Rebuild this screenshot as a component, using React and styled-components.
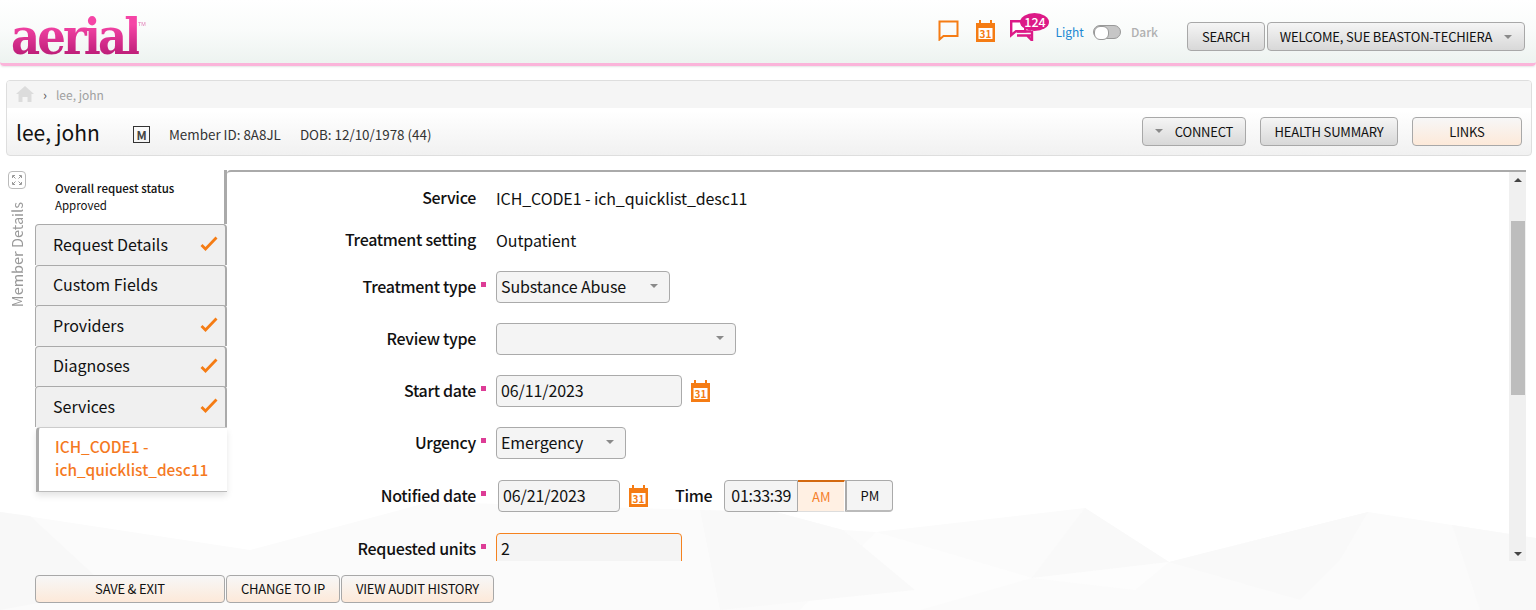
import styled, { createGlobalStyle } from "styled-components";

const GlobalStyle = createGlobalStyle`
  * { box-sizing: border-box; }
  html, body { margin: 0; padding: 0; background: #fff; }
  body {
    font-family: "Noto Sans CJK JP", "Noto Sans", sans-serif;
    color: #111;
    overflow: hidden;
  }
`;

const Page = styled.div`
  position: relative;
  width: 1536px;
  height: 610px;
  overflow: hidden;
  display: flex;
  flex-direction: column;
`;

const Backdrop = styled.svg`
  position: absolute;
  left: 0;
  bottom: 0;
  z-index: 0;
`;

const Header = styled.header`
  position: relative;
  z-index: 1;
  height: 66px;
  flex: none;
  display: flex;
  align-items: center;
  padding: 0 11px 0 11px;
  background: linear-gradient(#fff 0%, #f9fbfa 50%, #edf3f0 100%);
  border-bottom: 3px solid #fbb4da;
  border-radius: 0 0 4px 4px;
  box-shadow: 0 1px 2px rgba(0, 0, 0, 0.1);
`;

const Logo = styled.div`
  position: relative;
  font-family: "DejaVu Serif", serif;
  font-weight: 700;
  font-size: 50px;
  line-height: 50px;
  letter-spacing: -3.2px;
  margin-top: 10px;
  transform: scaleX(0.9);
  transform-origin: left center;
  background: linear-gradient(#f545a6 25%, #b91a75 90%);
  -webkit-background-clip: text;
  background-clip: text;
  color: transparent;
`;

const Tm = styled.span`
  position: absolute;
  top: 8px;
  right: -8px;
  font-family: "Liberation Sans", sans-serif;
  font-size: 6px;
  line-height: 8px;
  letter-spacing: 0;
  font-weight: 400;
  color: #e07ab5;
  -webkit-text-fill-color: #e07ab5;
`;

const HeaderTools = styled.div`
  margin-left: auto;
  display: flex;
  align-items: center;
  margin-top: 10px;
`;

const IconGroup = styled.div`
  display: flex;
  align-items: center;
  width: 117px;
  gap: 17px;
  margin-top: -12px;
`;

const Messages = styled.div`
  position: relative;
  width: 24px;
  height: 21px;
  margin-left: -2px;
`;

const Badge = styled.span`
  position: absolute;
  left: 10px;
  top: -7px;
  width: 29px;
  height: 18px;
  border-radius: 50%;
  background: #dc1a87;
  color: #fff;
  font-size: 12.5px;
  font-weight: 500;
  line-height: 17px;
  text-align: center;
`;

const ThemeLabel = styled.span`
  font-size: 12px;
  line-height: 20px;
  color: ${(p) => (p.$on ? "#1b87d2" : "#b0b0b0")};
  font-weight: ${(p) => (p.$on ? 400 : 500)};
`;

const Toggle = styled.span`
  position: relative;
  display: block;
  width: 28px;
  height: 14px;
  margin: 0 10px 0 9px;
  border-radius: 7px;
  border: 1px solid #999;
  background: #c6c6c6;
  &::before {
    content: "";
    position: absolute;
    left: 0;
    top: 0;
    width: 13px;
    height: 12px;
    border-radius: 6px;
    background: #fff;
    border: 1px solid #999;
  }
`;

const ThemeSwitch = styled.div`
  display: flex;
  align-items: center;
  margin-right: 29px;
  margin-top: -9px;
`;

const Button = styled.button`
  height: ${(p) => p.$h || 29}px;
  width: ${(p) => p.$w}px;
  flex: none;
  display: flex;
  align-items: center;
  justify-content: center;
  gap: 12px;
  padding: 0 0 ${(p) => (p.$h ? 2 : 0)}px;
  border: 1px solid #a8a8a8;
  border-radius: 4px;
  font-family: inherit;
  font-size: 13px;
  letter-spacing: -0.2px;
  color: #111;
  background: ${(p) =>
    p.$warm
      ? "linear-gradient(#f7f7f7 0%, #fde9d9 100%)"
      : "linear-gradient(#f5f5f5 0%, #d8d8d8 100%)"};
`;

const Caret = styled.i`
  display: inline-block;
  width: 0;
  height: 0;
  border-left: 4px solid transparent;
  border-right: 4px solid transparent;
  border-top: 4px solid #8a8a8a;
`;

const ButtonPair = styled.div`
  display: flex;
  gap: 2px;
`;

const Main = styled.main`
  position: relative;
  z-index: 1;
  flex: 1;
  display: flex;
  flex-direction: column;
  min-height: 0;
  padding-top: 14px;
`;

const MemberPanel = styled.section`
  flex: none;
  margin: 0 4px 0 6px;
  height: 76px;
  border: 1px solid #dedede;
  border-radius: 4px;
  overflow: hidden;
  background: linear-gradient(#fff 40%, #f1f1f1 100%);
`;

const Crumbs = styled.div`
  height: 27px;
  display: flex;
  align-items: center;
  padding: 0 0 1px 9px;
  background: #f5f5f5;
  font-size: 12px;
  color: #a0a0a0;
`;

const Sep = styled.span`
  margin: 0 9px 0 9px;
  color: #555;
  font-size: 13px;
`;

const MemberRow = styled.div`
  height: 47px;
  display: flex;
  align-items: center;
  padding: 0 9px 0 9px;
  font-size: 13.4px;
  color: #333;
`;

const MemberName = styled.h1`
  margin: 0;
  width: 117px;
  font-size: 21px;
  font-weight: 400;
  line-height: 32px;
  color: #111;
`;

const GenderBox = styled.span`
  width: 17px;
  height: 17px;
  margin: 6px 19px 0 0;
  border: 1px solid #333;
  display: flex;
  align-items: center;
  justify-content: center;
  font-size: 12px;
  font-weight: 700;
  color: #444;
`;

const MemberMeta = styled.span`
  margin-top: 4px;
  margin-right: ${(p) => p.$gap || 0}px;
`;

const MemberActions = styled.div`
  margin-left: auto;
  display: flex;
  gap: 14px;
  margin-top: -1px;
`;

const Workspace = styled.div`
  flex: 1;
  min-height: 0;
  display: flex;
  margin-top: 14px;
`;

const Rail = styled.aside`
  width: 35px;
  flex: none;
  display: flex;
  flex-direction: column;
  align-items: flex-start;
  padding: 1px 0 0 8px;
`;

const ExpandButton = styled.span`
  width: 18px;
  height: 18px;
  border: 1px solid #bbb;
  border-radius: 4px;
  display: flex;
  align-items: center;
  justify-content: center;
`;

const RailLabel = styled.span`
  writing-mode: vertical-rl;
  transform: rotate(180deg);
  margin-top: 13px;
  font-size: 14.5px;
  line-height: 18px;
  color: #999;
`;

const SideNav = styled.nav`
  width: 192px;
  flex: none;
  display: flex;
  flex-direction: column;
`;

const Status = styled.div`
  height: 54px;
  padding: 10px 0 0 20px;
  font-size: 11.5px;
  line-height: 17px;
  width: 192px;
  border-right: 3px solid #aaa;
  strong { display: block; font-weight: 500; }
`;

const Tab = styled.div`
  height: 41px;
  flex: none;
  display: flex;
  align-items: center;
  justify-content: space-between;
  padding: 0 7px 3px 17px;
  margin-bottom: -0.5px;
  border: 1px solid #aaa;
  border-right-width: 2px;
  border-bottom-width: 0;
  border-radius: 4px 4px 0 0;
  background: #f0f0f0;
  font-size: 16px;
  color: #111;
`;

const ActiveTab = styled.div`
  height: 65px;
  flex: none;
  padding: 7px 0 0 16px;
  border-left: 3px solid #aaa;
  border-top: 1px solid #ccc;
  border-bottom: 1px solid #bbb;
  border-radius: 4px 0 0 0;
  background: #fff;
  box-shadow: 0 4px 6px rgba(0, 0, 0, 0.1);
  font-size: 15.4px;
  font-weight: 500;
  line-height: 23.5px;
  color: #f5791f;
  margin-left: 1px;
  width: 191px;
`;

const ContentPanel = styled.section`
  flex: none;
  width: 1299px;
  height: 391px;
  display: flex;
  border-top: 2px solid #aaa;
  border-radius: 4px 0 0 0;
  overflow: hidden;
`;

const Form = styled.div`
  flex: 1;
  display: flex;
  flex-direction: column;
  gap: 20px;
  padding-top: 15px;
`;

const Row = styled.div`
  display: flex;
  align-items: center;
  flex: none;
  height: ${(p) => p.$h || 32}px;
  margin-top: ${(p) => p.$top || 0}px;
`;

const Label = styled.label`
  width: 249px;
  flex: none;
  text-align: right;
  font-size: 16px;
  font-weight: 500;
  letter-spacing: -0.3px;
  color: #111;
  margin-top: -3px;
`;

const Required = styled.span`
  width: 20px;
  flex: none;
  padding-left: 5px;
  margin-top: -5px;
  &::before {
    content: "";
    display: ${(p) => (p.$on ? "block" : "none")};
    width: 5px;
    height: 5px;
    background: #dd3c96;
  }
`;

const Value = styled.span`
  font-size: 16px;
  letter-spacing: -0.1px;
  color: #111;
  margin-top: -1px;
`;

const Field = styled.div`
  width: ${(p) => p.$w}px;
  height: 32px;
  flex: none;
  display: flex;
  align-items: center;
  justify-content: space-between;
  padding: 0 11px 2px 4px;
  background: #f4f4f4;
  border: 1px solid ${(p) => (p.$focus ? "#f5821f" : "#aaa")};
  border-radius: 4px;
  font-size: 16px;
  letter-spacing: -0.1px;
  color: #111;
  margin-left: ${(p) => p.$left || 0}px;
`;

const TimeLabel = styled.span`
  font-size: 16px;
  font-weight: 500;
  letter-spacing: -0.3px;
  margin: -3px 12px 0 27px;
`;

const TimeField = styled(Field)`
  padding: 0 0 2px 6px;
  border-radius: 4px 0 0 4px;
  letter-spacing: -0.3px;
`;

const Meridiem = styled.span`
  width: ${(p) => (p.$on ? 47 : 48)}px;
  height: 32px;
  display: flex;
  align-items: center;
  justify-content: center;
  font-size: 13px;
  background: ${(p) => (p.$on ? "#fff0e3" : "#f4f4f4")};
  color: ${(p) => (p.$on ? "#f57f2a" : "#111")};
  border: 1px solid #ccc;
  border-top: ${(p) => (p.$on ? "2px solid #d4690f" : "1px solid #aaa")};
  border-left: ${(p) => (p.$on ? "0" : "2px solid #aaa")};
  border-right: 1px solid ${(p) => (p.$on ? "#fff" : "#aaa")};
  border-bottom: ${(p) => (p.$on ? "1px solid #ddd" : "2px solid #bbb")};
  border-radius: ${(p) => (p.$on ? "0" : "0 4px 4px 0")};
`;

const CalendarSlot = styled.span`
  display: flex;
  margin-left: 9px;
  margin-top: -1px;
`;

const Scrollbar = styled.div`
  width: 17px;
  flex: none;
  background: #f0f0f0;
  position: relative;
  display: flex;
  flex-direction: column;
  align-items: center;
  justify-content: space-between;
  padding: 6px 0 5px;
`;

const ScrollThumb = styled.span`
  position: absolute;
  left: 2px;
  right: 1px;
  top: 49px;
  height: 174px;
  background: #bdbdbd;
`;

const Arrow = styled.i`
  width: 0;
  height: 0;
  border-left: 4px solid transparent;
  border-right: 4px solid transparent;
  ${(p) =>
    p.$down ? "border-top: 4px solid #444;" : "border-bottom: 4px solid #444;"}
`;

const Footer = styled.footer`
  flex: none;
  height: 49px;
  display: flex;
  align-items: flex-start;
  gap: 1px;
  padding: 14px 0 0 35px;
`;

const ChatIcon = () => (
  <svg width="21" height="21" viewBox="0 0 21 21" fill="none">
    <path d="M1.5 1.5h18v14.5H5.5L1.5 19.5z" stroke="#f57c14" strokeWidth="2" strokeLinejoin="miter" />
  </svg>
);

const CalendarIcon = () => (
  <svg width="19" height="22" viewBox="0 0 19 22">
    <path fill="#f57c14" d="M3 0h2v3h9V0h2v3h3v19H0V3h3z" />
    <rect x="2.5" y="8" width="14" height="11" fill="#fff" />
    <text x="9.5" y="17.5" fontSize="10" fontWeight="700" textAnchor="middle" fill="#f57c14" fontFamily="Noto Sans CJK JP, sans-serif">31</text>
  </svg>
);

const MessagesIcon = () => (
  <svg width="24" height="21" viewBox="0 0 24 21" fill="none" stroke="#dc1a87" strokeWidth="2.4">
    <path d="M1.2 1.2h14v10H6l-4.8 4z" fill="#fff" />
    <path d="M7 11.5h14M7 15.5h15V11M16 15.5h6v5l-5-5" />
  </svg>
);

const HomeIcon = () => (
  <svg width="18" height="16" viewBox="0 0 18 16" fill="#dcdcdc">
    <path d="M9 0l9 8h-2.5v8h-4v-5h-5v5h-4V8H0z" />
  </svg>
);

const ExpandIcon = () => (
  <svg width="10" height="10" viewBox="0 0 10 10" fill="none" stroke="#999" strokeWidth="1">
    <path d="M0.5 3V.5H3M7 .5h2.5V3M9.5 7v2.5H7M3 9.5H.5V7M1 1l2.5 2.5M9 1L6.5 3.5M9 9L6.5 6.5M1 9l2.5-2.5" />
  </svg>
);

const CheckIcon = () => (
  <svg width="18" height="15" viewBox="0 0 18 15" fill="none">
    <path d="M1.5 9l4 4L16.5 1.5" stroke="#f57c14" strokeWidth="2.8" />
  </svg>
);

const App = () => {
  const tabs = [
    { name: "Request Details", done: true },
    { name: "Custom Fields", done: false },
    { name: "Providers", done: true },
    { name: "Diagnoses", done: true },
    { name: "Services", done: true },
  ];

  return (
    <Page>
      <GlobalStyle />
      <Backdrop width="1536" height="110" viewBox="0 0 1536 110">
        <path fill="#fbfbfb" d="M0 12L250 50L430 2L700 10L776 12L843 30L876 32L1085 8L1169 62L1368 12L1452 25L1536 38V110H0z" />
        <path fill="#f8f8f8" d="M0 12L30 16L110 90L0 110z" />
        <path fill="#f9f9f9" d="M1085 8L1169 62L1032 78z" />
        <path fill="#f9f9f9" d="M1169 62L1368 12L1340 60L1300 100z" />
        <path fill="#fdfdfd" d="M876 32L1032 78L1169 62L1135 90L1032 78L920 110H800z" />
        <path fill="#f9f9f9" d="M1452 25L1536 38V110H1480z" />
        <path fill="#f9f9f9" d="M700 10L776 12L843 30L915 90L720 110z" />
      </Backdrop>
      <Header>
        <Logo>
          aerial<Tm>TM</Tm>
        </Logo>
        <HeaderTools>
          <IconGroup>
            <ChatIcon />
            <CalendarIcon />
            <Messages>
              <MessagesIcon />
              <Badge>124</Badge>
            </Messages>
          </IconGroup>
          <ThemeSwitch>
            <ThemeLabel $on>Light</ThemeLabel>
            <Toggle />
            <ThemeLabel>Dark</ThemeLabel>
          </ThemeSwitch>
          <ButtonPair>
            <Button $w={78}>SEARCH</Button>
            <Button $w={258}>
              WELCOME, SUE BEASTON-TECHIERA <Caret />
            </Button>
          </ButtonPair>
        </HeaderTools>
      </Header>
      <Main>
        <MemberPanel>
          <Crumbs>
            <HomeIcon />
            <Sep>›</Sep>
            lee, john
          </Crumbs>
          <MemberRow>
            <MemberName>lee, john</MemberName>
            <GenderBox>M</GenderBox>
            <MemberMeta $gap={19}>Member ID: 8A8JL</MemberMeta>
            <MemberMeta>DOB: 12/10/1978 (44)</MemberMeta>
            <MemberActions>
              <Button $w={104}>
                <Caret /> CONNECT
              </Button>
              <Button $w={138}>HEALTH SUMMARY</Button>
              <Button $w={110} $warm>
                LINKS
              </Button>
            </MemberActions>
          </MemberRow>
        </MemberPanel>
        <Workspace>
          <Rail>
            <ExpandButton>
              <ExpandIcon />
            </ExpandButton>
            <RailLabel>Member Details</RailLabel>
          </Rail>
          <SideNav>
            <Status>
              <strong>Overall request status</strong>
              Approved
            </Status>
            {tabs.map((tab) => (
              <Tab key={tab.name}>
                {tab.name}
                {tab.done && <CheckIcon />}
              </Tab>
            ))}
            <ActiveTab>
              ICH_CODE1 -<br />
              ich_quicklist_desc11
            </ActiveTab>
          </SideNav>
          <ContentPanel>
            <Form>
              <Row $h={22}>
                <Label>Service</Label>
                <Required />
                <Value>ICH_CODE1 - ich_quicklist_desc11</Value>
              </Row>
              <Row $h={22}>
                <Label>Treatment setting</Label>
                <Required />
                <Value>Outpatient</Value>
              </Row>
              <Row>
                <Label>Treatment type</Label>
                <Required $on />
                <Field $w={174}>
                  Substance Abuse <Caret />
                </Field>
              </Row>
              <Row>
                <Label>Review type</Label>
                <Required />
                <Field $w={240}>
                  <span />
                  <Caret />
                </Field>
              </Row>
              <Row>
                <Label>Start date</Label>
                <Required $on />
                <Field $w={186}>06/11/2023</Field>
                <CalendarSlot>
                  <CalendarIcon />
                </CalendarSlot>
              </Row>
              <Row>
                <Label>Urgency</Label>
                <Required $on />
                <Field $w={130}>
                  Emergency <Caret />
                </Field>
              </Row>
              <Row $top={1}>
                <Label>Notified date</Label>
                <Required $on />
                <Field $w={122} $left={2}>06/21/2023</Field>
                <CalendarSlot>
                  <CalendarIcon />
                </CalendarSlot>
                <TimeLabel>Time</TimeLabel>
                <TimeField $w={74}>01:33:39</TimeField>
                <Meridiem $on>AM</Meridiem>
                <Meridiem>PM</Meridiem>
              </Row>
              <Row $top={1}>
                <Label>Requested units</Label>
                <Required $on />
                <Field $w={186} $focus>2</Field>
              </Row>
            </Form>
            <Scrollbar>
              <Arrow />
              <ScrollThumb />
              <Arrow $down />
            </Scrollbar>
          </ContentPanel>
        </Workspace>
        <Footer>
          <Button $w={190} $h={28} $warm>SAVE &amp; EXIT</Button>
          <Button $w={114} $h={28} $warm>CHANGE TO IP</Button>
          <Button $w={153} $h={28} $warm>VIEW AUDIT HISTORY</Button>
        </Footer>
      </Main>
    </Page>
  );
};

export default App;
